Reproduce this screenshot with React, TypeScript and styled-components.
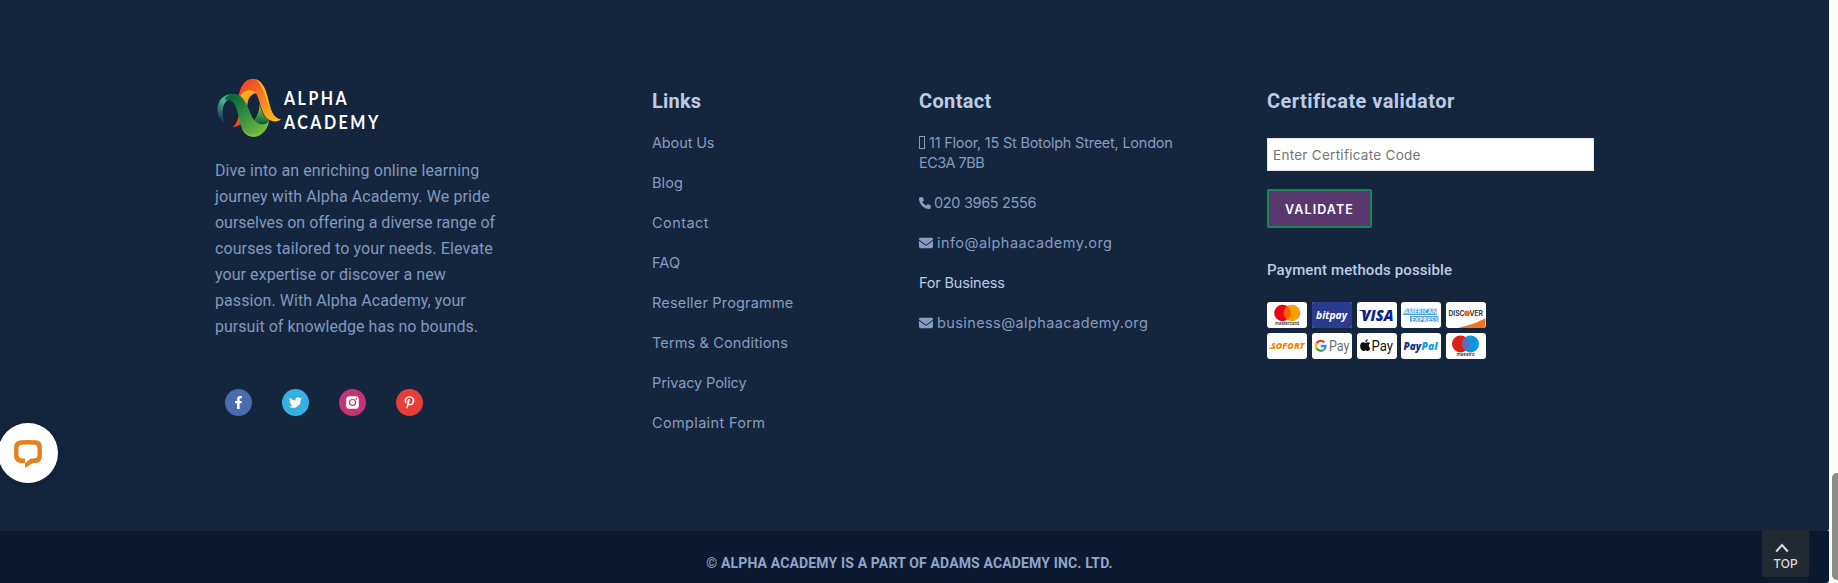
import React from "react";
import styled, { createGlobalStyle } from "styled-components";
import { FaFacebookF, FaTwitter, FaPinterestP } from "react-icons/fa";
import { FaPhone, FaEnvelope } from "react-icons/fa6";

const GlobalStyle = createGlobalStyle`
  * { box-sizing: border-box; }
  body { margin: 0; background: #fcfcfc; overflow: hidden; }
`;

const plex = `Roboto, "Liberation Sans", sans-serif`;
const poppins = `Inter, "Liberation Sans", sans-serif`;

const Page = styled.div`
  display: flex;
  height: 583px;
  width: 1838px;
`;
const Site = styled.div`
  width: 1829px;
  display: flex;
  flex-direction: column;
`;
const Footer = styled.footer`
  height: 531px;
  padding: 74px 0 0 215px;
  background: #14253e;
  border-radius: 0 0 2px 0;
  display: grid;
  grid-template-columns: 437px 267px 348px 327px;
  align-items: start;
`;
const Copyright = styled.div`
  height: 52px;
  padding: 23px 10px 0 0;
  background: #0b1a30;
  border-radius: 0 0 3px 0;
  color: #8fa5c9;
  font: 700 14px/18px ${plex};
  letter-spacing: 0.15px;
  text-align: center;
`;
const Scrollbar = styled.div`
  width: 9px;
  display: flex;
  flex-direction: column;
  justify-content: flex-end;
  padding: 0 0 3px 3px;
`;
const Thumb = styled.div`
  height: 107px;
  background: #8b8b8b;
  border-radius: 5px 0 0 5px;
`;

const LogoArt = styled.svg`
  display: block;
`;
const About = styled.p`
  margin: 16px 0 0;
  color: #8199be;
  font: 400 16px/26px ${plex};
`;
const Line = styled.span<{ $track: number }>`
  display: block;
  white-space: nowrap;
  letter-spacing: ${(p) => p.$track}px;
`;
const Socials = styled.div`
  display: flex;
  gap: 30px;
  margin: 49px 0 0 10px;
`;
const Social = styled.a<{ $color: string }>`
  width: 27px;
  height: 27px;
  border-radius: 50%;
  background: ${(p) => p.$color};
  color: #fff;
  font-size: 13px;
  display: flex;
  align-items: center;
  justify-content: center;
`;

const Column = styled.section`
  padding-top: 15px;
`;
const Heading = styled.h3<{ $track: number }>`
  margin: 0;
  color: #bccbe6;
  font: 700 20px/24px ${plex};
  letter-spacing: ${(p) => p.$track}px;
`;
const List = styled.ul`
  list-style: none;
  margin: 20px 0 0;
  padding: 0;
  display: flex;
  flex-direction: column;
  gap: 20px;
`;
const Item = styled.li<{ $bright?: boolean }>`
  color: ${(p) => (p.$bright ? "#bccbe6" : "#879cc0")};
  font: 400 14.5px/20px ${poppins};
`;
const Row = styled.div<{ $gap?: number }>`
  display: flex;
  align-items: center;
  gap: ${(p) => p.$gap ?? 4}px;
  svg { flex: none; }
`;
const EmptyGlyph = styled.span`
  width: 6px;
  height: 13px;
  margin-top: -1px;
  border: 1px solid #879cc0;
`;

const CodeInput = styled.input`
  display: block;
  width: 327px;
  height: 33px;
  margin-top: 25px;
  padding: 0 5px;
  border: 1px solid #e6e6e6;
  border-radius: 0;
  background: #fff;
  font: 400 13.5px ${poppins};
  letter-spacing: 0.28px;
  &::placeholder { color: #757575; opacity: 1; }
`;
const Validate = styled.button`
  width: 105px;
  height: 39px;
  margin-top: 18px;
  padding: 2px 0 0;
  display: block;
  border: 2px solid #128a50;
  border-radius: 2px;
  background: #5b376f;
  color: #fff;
  font: 600 12.5px ${poppins};
  letter-spacing: 1.1px;
`;
const SubHeading = styled.h4`
  margin: 32px 0 22px;
  color: #bccbe6;
  font: 500 15px/20px ${plex};
  letter-spacing: 0.12px;
`;
const Cards = styled.div`
  display: grid;
  grid-template-columns: repeat(5, 40px);
  column-gap: 4.8px;
  row-gap: 5px;
`;
const Card = styled.svg`
  display: block;
  width: 40px;
  height: 26px;
  border-radius: 3px;
  background: #fff;
`;

const ChatBubble = styled.button`
  position: fixed;
  left: -2px;
  top: 423px;
  width: 60px;
  height: 60px;
  padding: 1px 0 0;
  border: 0;
  border-radius: 50%;
  background: #fff;
  box-shadow: 0 3px 14px rgba(0, 0, 0, 0.2);
  display: flex;
  align-items: center;
  justify-content: center;
`;
const TopButton = styled.a`
  position: fixed;
  left: 1762px;
  top: 529px;
  width: 47px;
  height: 48px;
  padding-top: 14px;
  border-radius: 2px;
  background: #202a30;
  color: #dadde2;
  font: 500 12px/16px ${poppins};
  display: flex;
  flex-direction: column;
  align-items: center;
  svg { margin: 0 7px 3px 0; }
`;

function Logo() {
  return (
    <LogoArt width="180" height="68" viewBox="5 0 180 68" role="img" aria-label="Alpha Academy">
      <defs>
        <linearGradient id="flame" x1="0" y1="0" x2="1" y2="1">
          <stop offset="0.1" stopColor="#f04323" />
          <stop offset="0.45" stopColor="#f6762a" />
          <stop offset="0.9" stopColor="#fdb913" />
        </linearGradient>
        <linearGradient id="amber" x1="0" y1="0" x2="0" y2="1">
          <stop offset="0" stopColor="#fdb515" />
          <stop offset="0.5" stopColor="#f8961e" />
          <stop offset="1" stopColor="#ee3524" />
        </linearGradient>
        <linearGradient id="leaf" x1="0" y1="0" x2="1" y2="1">
          <stop offset="0.1" stopColor="#0a6338" />
          <stop offset="0.45" stopColor="#318d42" />
          <stop offset="1" stopColor="#8cc63f" />
        </linearGradient>
        <linearGradient id="lime" x1="0" y1="0" x2="0" y2="1">
          <stop offset="0" stopColor="#9fce43" />
          <stop offset="1" stopColor="#05623a" />
        </linearGradient>
        <linearGradient id="mint" x1="0.7" y1="0" x2="0.2" y2="1">
          <stop offset="0" stopColor="#2a9a62" />
          <stop offset="0.35" stopColor="#4bb98e" />
          <stop offset="1" stopColor="#17264d" />
        </linearGradient>
      </defs>
      <g transform="scale(0.3333)">
        <path d="M40 66C22 76 13 98 15 118C18 138 32 150 56 151C40 144 32 130 32 112C32 95 35 80 40 66Z" fill="#1d1c4c" />
        <path d="M85 74C94 46 120 38 143 58C129 57 117 67 113 86C108 121 106 158 68 159C82 148 88 128 88 104Z" fill="url(#amber)" />
        <path d="M85 77C88 37 105 15 126 14C151 15 165 35 174 74C182 108 189 133 213 136C206 144 190 144 178 138C154 126 152 82 139 60C124 40 98 47 85 77Z" fill="url(#flame)" />
        <path d="M133 15C158 19 168 47 174 74C182 108 189 133 213 136C188 137 180 113 170 81C161 50 151 23 133 15Z" fill="#fdb31a" />
        <path d="M148 88C151 108 139 132 129 143C145 155 163 154 178 137C161 130 156 115 148 88Z" fill="url(#lime)" />
        <path d="M46 148C22 139 17 108 27 85C38 59 74 53 94 69C73 65 51 72 42 92C35 110 37 133 46 148Z" fill="url(#mint)" />
        <path d="M66 61C92 57 105 77 116 105C125 130 136 151 157 151C166 151 173 146 178 137C175 166 154 189 129 189C105 188 95 168 89 142C82 109 77 74 43 77C49 68 56 62 66 61Z" fill="url(#leaf)" />
        <path d="M93 155C105 181 134 188 155 171C142 190 113 194 99 170Z" fill="#a5d043" opacity="0.4" />
      </g>
      <g fill="#fff" fontFamily="Lato, sans-serif" fontWeight="700" fontSize="19.5">
        <text transform="translate(74 30.7) scale(0.82 1)" textLength="76.5" lengthAdjust="spacing">ALPHA</text>
        <text transform="translate(74 55) scale(0.82 1)" textLength="115" lengthAdjust="spacing">ACADEMY</text>
      </g>
    </LogoArt>
  );
}

const InstagramMark = () => (
  <svg width="13" height="13" viewBox="0 0 13 13">
    <rect x="0.2" y="0.2" width="12.6" height="12.6" rx="3.4" fill="#fff" />
    <circle cx="6.5" cy="6.5" r="3" fill="none" stroke="#c13672" strokeWidth="1.2" />
    <circle cx="10.3" cy="2.9" r="0.8" fill="#c13672" />
  </svg>
);

type Mark = { x: number; y: number; w: number; size: number; fill: string; weight?: number; italic?: boolean; font?: string; children: string };
const Word = ({ x, y, w, size, fill, weight = 700, italic, font = "Open Sans", children }: Mark) => (
  <text x={x} y={y} textLength={w} lengthAdjust="spacingAndGlyphs" fontSize={size} fill={fill} fontWeight={weight} fontStyle={italic ? "italic" : "normal"} fontFamily={`"${font}", sans-serif`}>
    {children}
  </text>
);

function PaymentCards() {
  return (
    <Cards>
      <Card viewBox="0 0 40 26">
        <circle cx="15.5" cy="11" r="8.3" fill="#eb0014" />
        <circle cx="25" cy="11" r="8.3" fill="#f99f04" />
        <path d="M20.25 4.2a8.3 8.3 0 0 1 0 13.6a8.3 8.3 0 0 1 0-13.6Z" fill="#ff5f00" />
        <Word x={8} y={23.3} w={24} size={4.6} fill="#111" weight={500} font="Inter">mastercard</Word>
      </Card>
      <Card viewBox="0 0 40 26">
        <rect width="40" height="26" fill="#2b3c8e" />
        <Word x={4} y={17} w={31} size={11} fill="#fff" italic>bitpay</Word>
      </Card>
      <Card viewBox="0 0 40 26">
        <Word x={4.5} y={18.8} w={32} size={15.5} fill="#0b1f8f" weight={800} italic>VISA</Word>
        <path d="M2.3 8.1H8L10 14C8 10.5 5.5 9 2.3 8.5Z" fill="#0b1f8f" />
      </Card>
      <Card viewBox="0 0 40 26">
        <path d="M2 12.9L4.5 6.8H36V12.9ZM9 14H37.5V20H9Z" fill="#4f9fdc" />
        <Word x={3} y={12.2} w={33} size={7} fill="#e3f1fb">AMERICAN</Word>
        <Word x={10} y={19.5} w={27} size={7} fill="#e3f1fb">EXPRESS</Word>
      </Card>
      <Card viewBox="0 0 40 26">
        <path d="M12 26C24 23 33 20 39.5 16V23.5Q39.5 26 37 26Z" fill="#f47320" />
        <Word x={2.5} y={13.8} w={16} size={7.2} fill="#3a3b3d" font="Inter">DISC</Word>
        <circle cx="21" cy="11.3" r="2.9" fill="#f47320" />
        <Word x={23.5} y={13.8} w={13.5} size={7.2} fill="#3a3b3d" font="Inter">VER</Word>
      </Card>
      <Card viewBox="0 0 40 26">
        <Word x={4} y={15.8} w={33.5} size={9.5} fill="#ef8606" weight={800} italic>SOFORT</Word>
        <path d="M2 14.7H8L7.5 15.8H2Z" fill="#ef8606" />
      </Card>
      <Card viewBox="0 0 40 26">
        <g fill="none" strokeWidth="2.3">
          <path d="M12.3 9.3A5 5 0 0 0 4.5 10.4" stroke="#ea4335" />
          <path d="M4.5 10.4A5 5 0 0 0 4.5 15.3" stroke="#fbbc04" />
          <path d="M4.500 15.300A5 5 0 0 0 12 16.700" stroke="#34a853" />
          <path d="M12 16.700A4.900 4.900 0 0 0 13.500 13H8.700" stroke="#4285f4" />
        </g>
        <Word x={17} y={17.800} w={20.500} size={14.500} fill="#6b6f74" weight={400} font="Roboto">Pay</Word>
      </Card>
      <Card viewBox="0 0 40 26">
        <path d="M11.5 9.2c-1.3 0-1.7.6-2.6.6s-1.6-.6-2.7-.6C4.3 9.2 3 10.8 3 13.2c0 2.7 1.8 5.4 3.5 5.4.9 0 1.4-.5 2.5-.5s1.4.5 2.4.5c1.200 0 2.200-1.600 2.700-2.900-2.300-1.100-2.300-4-.2-5.300-.6-.8-1.500-1.200-2.400-1.200ZM8.700 9c-.1-1.500 1-2.800 2.500-3 .2 1.500-1 3-2.500 3Z" transform="translate(.4 .8) scale(.92)" fill="#111" />
        <Word x={14.5} y={17.8} w={21.5} size={14.5} fill="#111" weight={400} font="Roboto">Pay</Word>
      </Card>
      <Card viewBox="0 0 40 26">
        <Word x={2.5} y={16.8} w={17.5} size={10} fill="#14308c" weight={800} italic>Pay</Word>
        <Word x={20.5} y={16.8} w={16} size={10} fill="#149be0" weight={800} italic>Pal</Word>
      </Card>
      <Card viewBox="0 0 40 26">
        <circle cx="14.5" cy="11" r="8.5" fill="#d9220f" />
        <circle cx="24.5" cy="11" r="8.5" fill="#0e96e0" />
        <path d="M19.5 4.15a8.5 8.5 0 0 1 0 13.7a8.5 8.5 0 0 1 0-13.7Z" fill="#6f62b4" />
        <Word x={10.5} y={23.3} w={18} size={4.6} fill="#111" weight={500} font="Inter">maestro</Word>
      </Card>
    </Cards>
  );
}

const aboutLines: [string, number][] = [
  ["Dive into an enriching online learning", 0.1],
  ["journey with Alpha Academy. We pride", 0.11],
  ["ourselves on offering a diverse range of", -0.01],
  ["courses tailored to your needs. Elevate", 0.1],
  ["your expertise or discover a new", 0.06],
  ["passion. With Alpha Academy, your", 0.06],
  ["pursuit of knowledge has no bounds.", 0.03],
];

const links: [string, number][] = [
  ["About Us", -0.13],
  ["Blog", 0.1],
  ["Contact", 0.45],
  ["FAQ", 0.1],
  ["Reseller Programme", 0.18],
  ["Terms & Conditions", 0.13],
  ["Privacy Policy", -0.1],
  ["Complaint Form", 0.35],
];

export default function App() {
  return (
    <Page>
      <GlobalStyle />
      <Site>
        <Footer>
          <div>
            <Logo />
            <About>
              {aboutLines.map(([text, track]) => (
                <Line key={text} $track={track}>{text}</Line>
              ))}
            </About>
            <Socials>
              <Social $color="#4b6ab0"><FaFacebookF /></Social>
              <Social $color="#36afe2"><FaTwitter /></Social>
              <Social $color="#c13672"><InstagramMark /></Social>
              <Social $color="#e83e39"><FaPinterestP /></Social>
            </Socials>
          </div>
          <Column>
            <Heading $track={0.2}>Links</Heading>
            <List>
              {links.map(([text, track]) => (
                <Item key={text}><Line $track={track}>{text}</Line></Item>
              ))}
            </List>
          </Column>
          <Column>
            <Heading $track={0.35}>Contact</Heading>
            <List>
              <Item>
                <Row><EmptyGlyph /><Line $track={-0.23}>11 Floor, 15 St Botolph Street, London</Line></Row>
                <Line $track={-0.55}>EC3A 7BB</Line>
              </Item>
              <Item><Row $gap={3}><FaPhone size={12} /><Line $track={-0.33}>020 3965 2556</Line></Row></Item>
              <Item><Row $gap={4}><FaEnvelope size={14} /><Line $track={0.45}>info@alphaacademy.org</Line></Row></Item>
              <Item $bright><Line $track={-0.17}>For Business</Line></Item>
              <Item><Row $gap={4}><FaEnvelope size={14} /><Line $track={0.4}>business@alphaacademy.org</Line></Row></Item>
            </List>
          </Column>
          <Column>
            <Heading $track={0.45}>Certificate validator</Heading>
            <CodeInput placeholder="Enter Certificate Code" />
            <Validate>VALIDATE</Validate>
            <SubHeading>Payment methods possible</SubHeading>
            <PaymentCards />
          </Column>
        </Footer>
        <Copyright>© ALPHA ACADEMY IS A PART OF ADAMS ACADEMY INC. LTD.</Copyright>
      </Site>
      <Scrollbar><Thumb /></Scrollbar>
      <ChatBubble aria-label="Open chat">
        <svg width="30" height="30" viewBox="0 0 30 30">
          <path fillRule="evenodd" fill="#e28122" d="M8 1.3Q15 .7 23 1.3Q28.5 1.8 28.8 7Q29.2 12 28.8 18Q28.4 23.5 23 24H20L12 29V24H8Q1.5 23.5 1.2 18Q.8 12 1.2 7Q1.6 1.8 8 1.3ZM8.5 5.7Q5.7 6 5.6 8.5Q5.3 12 5.6 17Q5.9 19.4 8.5 19.5H12V24L18 19.5H21.5Q24.2 19.3 24.4 17Q24.8 12 24.4 8.5Q24.2 6 21.5 5.7Q15 5.1 8.5 5.7Z" />
        </svg>
      </ChatBubble>
      <TopButton>
        <svg width="14" height="10" viewBox="0 0 14 10"><path d="M1.2 8.5L7 2L12.8 8.5" fill="none" stroke="currentColor" strokeWidth="2" /></svg>
        TOP
      </TopButton>
    </Page>
  );
}
